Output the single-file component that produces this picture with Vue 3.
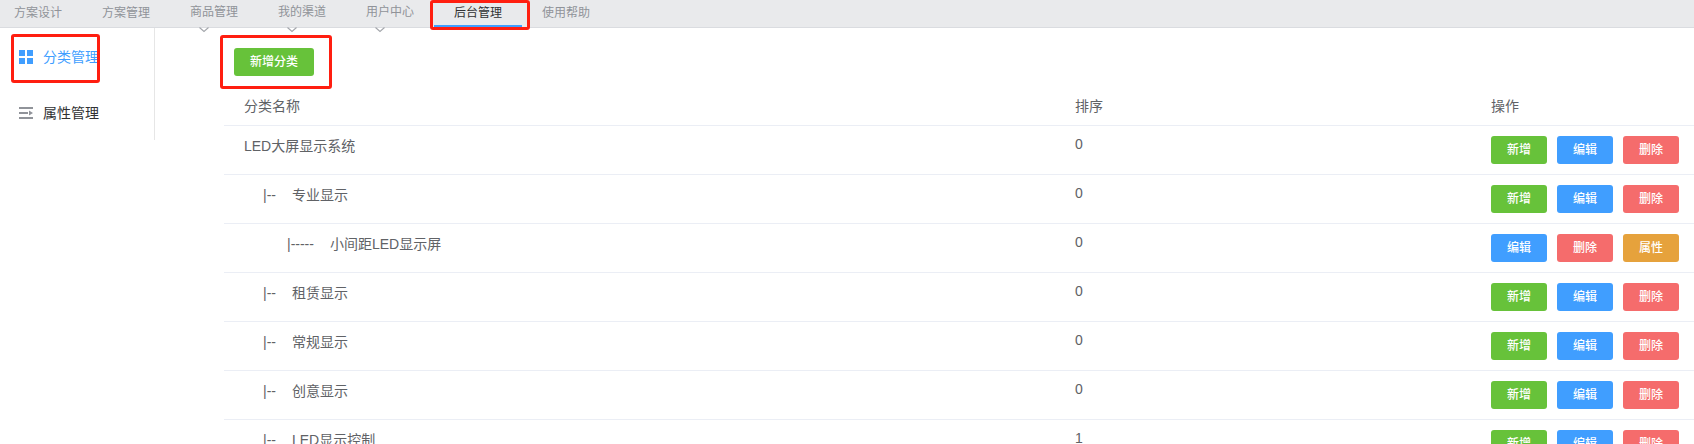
<script setup>
const tabs = [
  { label: '方案设计' },
  { label: '方案管理' },
  { label: '商品管理', menu: true },
  { label: '我的渠道', menu: true },
  { label: '用户中心', menu: true },
  { label: '后台管理', active: true },
  { label: '使用帮助' },
]

const actions = {
  add: { label: '新增', kind: 'success' },
  edit: { label: '编辑', kind: 'primary' },
  remove: { label: '删除', kind: 'danger' },
  attrs: { label: '属性', kind: 'warning' },
}
const branch = ['add', 'edit', 'remove']
const leaf = ['edit', 'remove', 'attrs']

const rows = [
  { name: 'LED大屏显示系统', level: 0, sort: 0, actions: branch },
  { name: '专业显示', level: 1, sort: 0, actions: branch },
  { name: '小间距LED显示屏', level: 2, sort: 0, actions: leaf },
  { name: '租赁显示', level: 1, sort: 0, actions: branch },
  { name: '常规显示', level: 1, sort: 0, actions: branch },
  { name: '创意显示', level: 1, sort: 0, actions: branch },
  { name: 'LED显示控制', level: 1, sort: 1, actions: branch },
]
const markers = ['', '|--', '|-----']
</script>

<template>
  <div class="page">
    <nav class="topbar">
      <a
        v-for="tab in tabs"
        :key="tab.label"
        href="#"
        class="tab"
        :class="{ active: tab.active, 'has-menu': tab.menu }"
      >
        {{ tab.label }}
        <svg v-if="tab.menu" class="arrow" viewBox="0 0 12 6" aria-hidden="true">
          <path d="M1.5 0.5 L6 4.5 L10.5 0.5" fill="none" stroke="#a3a6ab" stroke-width="1.1" />
        </svg>
        <span v-if="tab.active" class="mark"></span>
      </a>
    </nav>

    <div class="body">
      <nav class="sidebar">
        <a href="#" class="side-item current">
          <svg class="icon" viewBox="0 0 14 16" aria-hidden="true">
            <path d="M0 2h6v6H0zM8 2h6v6H8zM0 10h6v6H0zM8 10h6v6H8z" fill="#409eff" />
          </svg>
          分类管理
          <span class="mark"></span>
        </a>
        <a href="#" class="side-item">
          <svg class="icon" viewBox="0 0 14 16" aria-hidden="true">
            <path d="M0 3h14v2H0zM0 8h9v2H0zM0 13h14v2H0zM10 6.5L14 9L10 11.5z" fill="#909399" />
          </svg>
          属性管理
        </a>
      </nav>

      <main class="content">
        <div class="toolbar">
          <div class="marked">
            <button type="button" class="btn success">新增分类</button>
            <span class="mark"></span>
          </div>
        </div>

        <table class="table">
          <thead>
            <tr>
              <th class="name">分类名称</th>
              <th class="sort">排序</th>
              <th class="ops">操作</th>
            </tr>
          </thead>
          <tbody>
            <tr v-for="row in rows" :key="row.name">
              <td class="name">
                <span v-if="row.level" class="branch" :class="'level-' + row.level">{{ markers[row.level] }}</span>
                <span>{{ row.name }}</span>
              </td>
              <td class="sort">{{ row.sort }}</td>
              <td class="ops">
                <div class="buttons">
                  <button
                    v-for="key in row.actions"
                    :key="key"
                    type="button"
                    class="btn"
                    :class="actions[key].kind"
                  >{{ actions[key].label }}</button>
                </div>
              </td>
            </tr>
          </tbody>
        </table>
      </main>
    </div>
  </div>
</template>

<style>
html {
  scrollbar-width: none;
  background: #fff;
}
</style>

<style scoped>
.page {
  font-family: "Liberation Sans", "Noto Sans CJK SC", sans-serif;
  font-size: 14px;
  color: #606266;
}
.page * {
  box-sizing: border-box;
}
a {
  text-decoration: none;
}
.topbar {
  display: flex;
  gap: 40px;
  height: 28px;
  padding-left: 14px;
  background: #e9eaec;
  border-bottom: 1px solid #dadce0;
}
.tab {
  position: relative;
  font-size: 12px;
  line-height: 26px;
  color: #909399;
  white-space: nowrap;
}
.tab.has-menu {
  line-height: 24px;
}
.tab.active {
  color: #303133;
}
.tab.active::after {
  content: "";
  position: absolute;
  left: -20px;
  right: -20px;
  bottom: 0;
  height: 2px;
  background: #409eff;
}
.arrow {
  position: absolute;
  left: 8px;
  top: 27px;
  width: 12px;
  height: 6px;
}
.mark {
  position: absolute;
  z-index: 1;
  border: 3px solid #ff1e10;
  border-radius: 3px;
  pointer-events: none;
}
.tab .mark {
  left: -24px;
  top: 0;
  width: 100px;
  height: 30px;
}
.body {
  display: flex;
  align-items: flex-start;
}
.sidebar {
  flex: none;
  width: 155px;
  border-right: 1px solid #e6e6e6;
}
.side-item {
  position: relative;
  display: flex;
  align-items: center;
  gap: 10px;
  height: 56px;
  padding-left: 19px;
  color: #303133;
}
.side-item.current {
  color: #409eff;
}
.icon {
  width: 14px;
  height: 16px;
}
.side-item .mark {
  left: 11px;
  top: 6px;
  width: 89px;
  height: 49px;
}
.content {
  flex: 1;
  min-width: 0;
  margin-left: 69px;
}
.toolbar {
  display: flex;
  padding: 20px 10px 10px;
}
.marked {
  position: relative;
  display: flex;
}
.marked .mark {
  left: -14px;
  top: -13px;
  width: 112px;
  height: 54px;
}
.btn {
  height: 28px;
  padding: 0 16px;
  border: 0;
  border-radius: 3px;
  font-family: inherit;
  font-size: 12px;
  font-weight: 500;
  line-height: 28px;
  color: #fff;
  white-space: nowrap;
  cursor: pointer;
}
.success {
  background: #67c23a;
}
.primary {
  background: #409eff;
}
.danger {
  background: #f56c6c;
}
.warning {
  background: #e6a23c;
}
.table {
  width: 100%;
  table-layout: fixed;
  border-spacing: 0;
}
th,
td {
  padding: 10px 0;
  border-bottom: 1px solid #ebeef5;
  text-align: left;
  vertical-align: top;
  font-weight: 400;
  white-space: nowrap;
}
th {
  padding-bottom: 9px;
  line-height: 20px;
}
td.name {
  line-height: 20px;
}
td.sort {
  line-height: 16px;
}
.name {
  padding-left: 20px;
}
.sort {
  width: 28.3%;
}
.ops {
  width: 203px;
}
.branch {
  display: inline-block;
  margin-right: 12px;
}
.branch::after {
  content: "";
  display: inline-block;
  width: 4px;
}
.level-1 {
  margin-left: 19px;
}
.level-2 {
  margin-left: 43px;
}
.buttons {
  display: flex;
  gap: 10px;
}
</style>
